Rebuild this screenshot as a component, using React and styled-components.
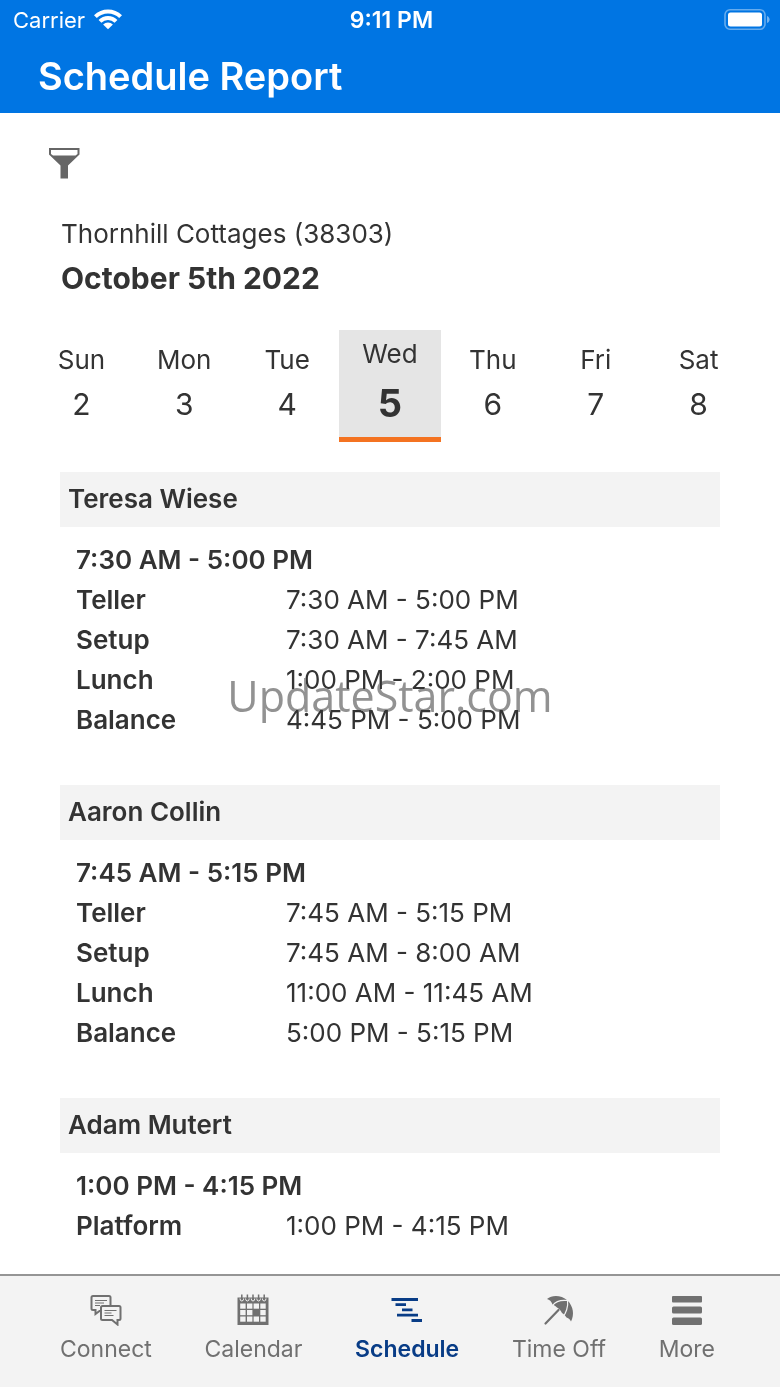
import React, { useState } from "react";
import styled, { createGlobalStyle } from "styled-components";

const GlobalStyle = createGlobalStyle`
  * {
    box-sizing: border-box;
  }

  body {
    margin: 0;
    background: #ffffff;
    color: #333333;
    font-family: Inter, "Liberation Sans", sans-serif;
    font-size: 26px;
  }

  button {
    border: 0;
    padding: 0;
    background: none;
    color: inherit;
    font: inherit;
    cursor: pointer;
  }

  h1, h2, h3, p, dl, dt, dd {
    margin: 0;
    font-size: inherit;
    font-weight: inherit;
  }
`;

const Page = styled.div`
  display: flex;
  flex-direction: column;
  min-height: 100vh;
`;

const Header = styled.header`
  height: 113px;
  background: #0075e3;
  color: #ffffff;
`;

const StatusBar = styled.div`
  display: grid;
  grid-template-columns: 1fr auto 1fr;
  align-items: center;
  height: 40px;
  padding: 0 10px 0 13px;
  font-size: 22px;
`;

const Carrier = styled.div`
  display: flex;
  align-items: center;
  gap: 8px;
`;

const Clock = styled.time`
  font-size: 23px;
  font-weight: 600;
`;

const Battery = styled.div`
  display: flex;
  justify-content: flex-end;
`;

const Title = styled.h1`
  padding-left: 38px;
  font-size: 38px;
  line-height: 72px;
  font-weight: 600;
`;

const Content = styled.main`
  flex: 1;
  padding: 34px 30px 0;
`;

const FilterButton = styled.button`
  display: block;
  margin-left: 18px;
  height: 36px;
`;

const Location = styled.p`
  margin: 30px 31px 0;
  line-height: 42px;
`;

const DateHeading = styled.h2`
  margin: 0 31px;
  font-size: 30px;
  line-height: 46px;
  font-weight: 700;
`;

const Week = styled.div`
  display: grid;
  grid-template-columns: repeat(7, 1fr);
  height: 112px;
  margin: 29px 0 30px;
`;

const Day = styled.button`
  display: flex;
  flex-direction: column;
  align-items: center;
  padding-top: ${(props) => (props.$active ? "4px" : "10px")};
  line-height: 40px;
  background: ${(props) => (props.$active ? "#e5e5e5" : "transparent")};
  border-bottom: 5px solid ${(props) => (props.$active ? "#f47321" : "transparent")};
`;

const DayNumber = styled.span`
  font-size: ${(props) => (props.$active ? "38px" : "30px")};
  line-height: ${(props) => (props.$active ? "58px" : "48px")};
  font-weight: ${(props) => (props.$active ? 700 : 400)};
`;

const Shifts = styled.div`
  position: relative;
  display: flex;
  flex-direction: column;
  gap: 45px;
  margin: 0 30px;
`;

const Name = styled.h3`
  height: 55px;
  margin-bottom: 13px;
  padding-left: 8px;
  background: #f3f3f3;
  line-height: 54px;
  font-weight: 600;
`;

const ShiftTime = styled.p`
  padding-left: 16px;
  line-height: 40px;
  font-weight: 600;
`;

const Tasks = styled.dl`
  display: grid;
  grid-template-columns: 210px 1fr;
  padding-left: 16px;
  line-height: 40px;

  dt {
    font-weight: 600;
  }
`;

const Watermark = styled.div`
  position: absolute;
  top: 194px;
  left: 0;
  right: 0;
  text-align: center;
  font-family: "Open Sans", "Noto Sans", sans-serif;
  font-size: 43px;
  line-height: 60px;
  color: #929292;
  mix-blend-mode: darken;
  pointer-events: none;
`;

const TabBar = styled.nav`
  display: flex;
  justify-content: space-between;
  height: 113px;
  padding: 18px 65px 0 60px;
  border-top: 2px solid #959595;
  background: #f3f3f3;
`;

const Tab = styled.button`
  display: flex;
  flex-direction: column;
  align-items: center;
  gap: 8px;
  height: 70px;
  color: ${(props) => (props.$active ? "#083c86" : "#707070")};
  font-size: 23px;
  line-height: 30px;
  font-weight: ${(props) => (props.$active ? 600 : 400)};
`;

const WifiIcon = () => (
  <svg width="30" height="22" viewBox="0 1 30 22" fill="#fff" aria-hidden="true">
    <path d="M1 7.2a20 20 0 0 1 28 0l-2.800 2.900a16 16 0 0 0-22.400 0z" />
    <path d="M5.600 11.900a13.500 13.500 0 0 1 18.800 0l-2.800 2.800a9.500 9.500 0 0 0-13.200 0z" />
    <path d="M10.100 16.400a7 7 0 0 1 9.800 0L15 21.300z" />
  </svg>
);

const BatteryIcon = () => (
  <svg width="46" height="22" viewBox="0 0 46 22" fill="none" aria-hidden="true">
    <rect x="1" y=".8" width="40" height="19.400" rx="5" stroke="#fff" strokeOpacity=".4" strokeWidth="1.600" />
    <rect x="4" y="3.500" width="34" height="14" rx="2.500" fill="#fff" />
    <path d="M43 7v7c1.600-.5 2.600-2 2.600-3.500s-1-3-2.600-3.500z" fill="#fff" fillOpacity=".45" />
  </svg>
);

const FilterIcon = () => (
  <svg width="32" height="32" viewBox="0 0 32 32" fill="#666" aria-hidden="true">
    <path fillRule="evenodd" d="M1 1h30.500v6.500L20 18.500v13h-7.500v-13L1 7.500zM3 3v4l2 1.500h22.500l2-1.500V3z" />
  </svg>
);

const ConnectIcon = () => (
  <svg width="32" height="32" viewBox="0 0 32 32" fill="none" stroke="currentColor" strokeWidth="2" aria-hidden="true">
    <path d="M10.500 17H9.500L5.500 20v-4H3a1.500 1.500 0 0 1-1.500-1.500v-11A1.500 1.500 0 0 1 3 2h16a1.500 1.500 0 0 1 1.500 1.500V11" />
    <path d="M12.500 12H29a1.500 1.500 0 0 1 1.500 1.500v11A1.500 1.500 0 0 1 29 26h-1.500v4.500L22 26h-9.500a1.500 1.500 0 0 1-1.500-1.500v-11a1.500 1.500 0 0 1 1.500-1.500z" />
    <path strokeWidth="1.200" d="M5 6.500h12M5 9h9M5 11.500h5M14.500 16.500h12M14.500 19h7M14.500 21.500h9" />
  </svg>
);

const CalendarIcon = () => (
  <svg width="32" height="32" viewBox="0 0 32 32" aria-hidden="true">
    <path fill="currentColor" d="M.5 3.500h31v27.500H.5z" />
    <path fill="none" stroke="#f3f3f3" strokeWidth="1" d="M3 4.500q0 2.500 1.800 2.500t1.800-2.500M8.600 4.500q0 2.500 1.800 2.500t1.800-2.500M14.200 4.500q0 2.500 1.800 2.500t1.800-2.500M19.800 4.500q0 2.500 1.800 2.500t1.800-2.500M25.400 4.500q0 2.500 1.800 2.500t1.800-2.500" />
    <path stroke="currentColor" strokeWidth="1.500" d="M4.800.500v5.500M10.400.500v5.500M16 .500v5.500M21.600.500v5.500M27.200.500v5.500" />
    <g fill="#f3f3f3">
      {[9.500, 16, 22.500].map((y, row) =>
        [3.200, 10, 16.600, 23.300].map((x, col) =>
          row === 1 && col === 2 ? null : <rect key={`${x}-${y}`} x={x} y={y} width="5.400" height="5.200" />
        )
      )}
    </g>
  </svg>
);

const ScheduleIcon = () => (
  <svg width="32" height="32" viewBox="0 0 32 32" fill="currentColor" aria-hidden="true">
    <path d="M.5 4h26.500v3H.5zM4.500 9.200h10.500v2.800H4.500zM11 14.500h10.500v2.800H11zM6 19.800h21v2.700H6zM20.500 25h10.500v3H20.500z" />
  </svg>
);

const UmbrellaIcon = () => (
  <svg width="32" height="32" viewBox="0 0 32 32" aria-hidden="true">
    <path fill="currentColor" d="M4 5C9 .8 18 .8 24.500 6.500 30.500 12.500 31.500 21 28 27.500c-.5-1.500-2-3-4.500-4-1.500-2.500-3-3.500-4.500-4.500-1.200-2.500-2.800-4.200-5-5.500-1.500-1.500-2.800-2.500-4.500-3C8.500 7.500 6.500 5.500 4 5z" />
    <path fill="none" stroke="#f3f3f3" strokeWidth="1.200" d="M9.500 11.500C12.500 7.500 18.500 5.800 24.500 6.500c1 6-1.500 13-5 17M24.500 6.500L27 4" />
    <path stroke="currentColor" strokeWidth="2.200" strokeLinecap="round" d="M2.500 29.500L15.500 16" />
  </svg>
);

const MoreIcon = () => (
  <svg width="32" height="32" viewBox="0 0 32 32" fill="currentColor" aria-hidden="true">
    <rect x="1" y="2" width="30" height="6.500" rx="1" />
    <rect x="1" y="12.500" width="30" height="7" rx="1.500" />
    <rect x="1" y="23.500" width="30" height="7.500" rx="1.500" />
  </svg>
);

const days = [
  ["Sun", 2],
  ["Mon", 3],
  ["Tue", 4],
  ["Wed", 5],
  ["Thu", 6],
  ["Fri", 7],
  ["Sat", 8],
];

const employees = [
  {
    name: "Teresa Wiese",
    time: "7:30 AM - 5:00 PM",
    tasks: [
      ["Teller", "7:30 AM - 5:00 PM"],
      ["Setup", "7:30 AM - 7:45 AM"],
      ["Lunch", "1:00 PM - 2:00 PM"],
      ["Balance", "4:45 PM - 5:00 PM"],
    ],
  },
  {
    name: "Aaron Collin",
    time: "7:45 AM - 5:15 PM",
    tasks: [
      ["Teller", "7:45 AM - 5:15 PM"],
      ["Setup", "7:45 AM - 8:00 AM"],
      ["Lunch", "11:00 AM - 11:45 AM"],
      ["Balance", "5:00 PM - 5:15 PM"],
    ],
  },
  {
    name: "Adam Mutert",
    time: "1:00 PM - 4:15 PM",
    tasks: [["Platform", "1:00 PM - 4:15 PM"]],
  },
];

const tabs = [
  ["Connect", ConnectIcon],
  ["Calendar", CalendarIcon],
  ["Schedule", ScheduleIcon],
  ["Time Off", UmbrellaIcon],
  ["More", MoreIcon],
];

function App() {
  const [day, setDay] = useState(5);
  const [tab, setTab] = useState("Schedule");

  return (
    <Page>
      <GlobalStyle />
      <Header>
        <StatusBar>
          <Carrier>
            Carrier <WifiIcon />
          </Carrier>
          <Clock>9:11 PM</Clock>
          <Battery>
            <BatteryIcon />
          </Battery>
        </StatusBar>
        <Title>Schedule Report</Title>
      </Header>

      <Content>
        <FilterButton aria-label="Filter">
          <FilterIcon />
        </FilterButton>
        <Location>Thornhill Cottages (38303)</Location>
        <DateHeading>October 5th 2022</DateHeading>

        <Week>
          {days.map(([label, number]) => (
            <Day key={label} $active={day === number} onClick={() => setDay(number)}>
              {label}
              <DayNumber $active={day === number}>{number}</DayNumber>
            </Day>
          ))}
        </Week>

        <Shifts>
          {employees.map((employee) => (
            <section key={employee.name}>
              <Name>{employee.name}</Name>
              <ShiftTime>{employee.time}</ShiftTime>
              <Tasks>
                {employee.tasks.map(([task, time]) => (
                  <React.Fragment key={task}>
                    <dt>{task}</dt>
                    <dd>{time}</dd>
                  </React.Fragment>
                ))}
              </Tasks>
            </section>
          ))}
          <Watermark>UpdateStar.com</Watermark>
        </Shifts>
      </Content>

      <TabBar>
        {tabs.map(([label, Icon]) => (
          <Tab key={label} $active={tab === label} onClick={() => setTab(label)}>
            <Icon />
            {label}
          </Tab>
        ))}
      </TabBar>
    </Page>
  );
}

export default App;
